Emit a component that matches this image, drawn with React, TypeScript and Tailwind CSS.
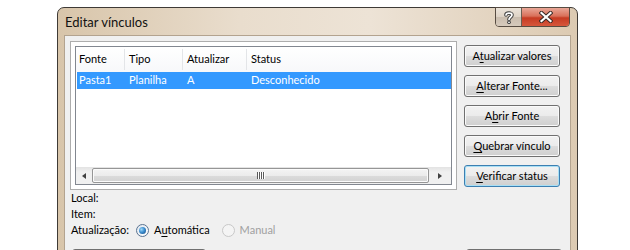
import React from "react";

const U = ({ children }: { children: React.ReactNode }) => (
  <span className="underline underline-offset-[2px] decoration-[1px]">{children}</span>
);

const Btn = ({ children, focused }: { children: React.ReactNode; focused?: boolean }) => (
  <div
    className={
      "h-[22px] w-[96px] rounded-[3px] border flex items-center justify-center text-[11px] leading-none text-black bg-[linear-gradient(to_bottom,#f2f2f2_0%,#ebebeb_50%,#dddddd_51%,#cfcfcf_100%)] " +
      (focused
        ? "border-[#3c7fb1] shadow-[inset_0_0_0_1px_#a8dff5]"
        : "border-[#707070] shadow-[inset_0_0_0_1px_#fafafa]")
    }
  >
    <span className="pb-[1px]">{children}</span>
  </div>
);

const Grip = () => (
  <div className="flex gap-[1px] items-center">
    {[0, 1, 2, 3].map((i) => (
      <div key={i} className="w-[1px] h-[7px] bg-[#5a5a5a] shadow-[1px_0_0_#ffffff]" />
    ))}
  </div>
);

export default function App() {
  return (
    <div className="w-[630px] h-[250px] bg-white overflow-hidden pl-[57px] pt-[7px] font-[Lato,sans-serif] text-black">
      <div className="w-[521px] h-[270px] rounded-t-[7px] border border-[#3e3a36] bg-[linear-gradient(to_right,#d8c5aa_0%,#e9ddcd_35%,#ede3d6_60%,#dccab2_100%)] flex flex-col px-[6px]">
        {/* Title bar */}
        <div className="h-[27px] flex items-start justify-between">
          <div className="pt-[7px] pl-[1px] text-[13px] leading-[15px] text-[#111]">Editar vínculos</div>
          <div className="flex mt-[-1px] mr-[1px] h-[20px] rounded-b-[4px] border border-[#574c42] overflow-hidden">
            <div className="w-[26px] h-full flex items-center justify-center bg-[linear-gradient(to_bottom,#ece4da_0%,#ddd2c5_50%,#cabdae_51%,#d6cabc_100%)] border-r border-[#6b5e52]">
              <svg width="10" height="13" viewBox="0 0 10 13">
                <path d="M2 4 C2 1.5 8 1.5 8 4 C8 6 5 6 5 8.5" fill="none" stroke="#3b3b3b" strokeWidth="3.6" strokeLinecap="round" />
                <circle cx="5" cy="11.3" r="1.8" fill="#3b3b3b" />
                <path d="M2 4 C2 1.5 8 1.5 8 4 C8 6 5 6 5 8.5" fill="none" stroke="#ffffff" strokeWidth="1.7" strokeLinecap="round" />
                <circle cx="5" cy="11.3" r="0.9" fill="#ffffff" />
              </svg>
            </div>
            <div className="w-[47px] h-full flex items-center justify-center bg-[linear-gradient(to_bottom,#e9a797_0%,#d9705a_45%,#c63b23_55%,#d6573c_100%)]">
              <svg width="14" height="12" viewBox="0 0 14 12">
                <path d="M2.5 2 L11.5 10 M11.5 2 L2.5 10" stroke="#3a2a26" strokeWidth="4.2" strokeLinecap="square" />
                <path d="M2.5 2 L11.5 10 M11.5 2 L2.5 10" stroke="#ffffff" strokeWidth="2.2" strokeLinecap="square" />
              </svg>
            </div>
          </div>
        </div>

        {/* Client area */}
        <div className="flex-1 border border-[#b3a38f] bg-[#f0f0f0] flex flex-col pl-[5px] pr-[8px] pt-[5px] text-[11px]">
          <div className="flex gap-[7px]">
            {/* List box */}
            <div className="w-[387px] h-[149px] border border-[#adadad] bg-white p-[4px] flex">
              <div className="flex-1 border border-[#828790] flex flex-col">
                {/* header */}
                <div className="h-[25px] flex items-center bg-[linear-gradient(to_bottom,#ffffff,#f7f8fa)]">
                  <div className="w-[49px] h-[21px] border-r border-[#e3e5e8] pl-[3px] flex items-center">Fonte</div>
                  <div className="w-[58px] h-[21px] border-r border-[#e3e5e8] pl-[4px] flex items-center">Tipo</div>
                  <div className="w-[64px] h-[21px] border-r border-[#e3e5e8] pl-[4px] flex items-center">Atualizar</div>
                  <div className="flex-1 h-[21px] pl-[4px] flex items-center">Status</div>
                </div>
                {/* selected row */}
                <div className="h-[17px] ml-[1px] flex items-center bg-[#3399ff] text-white">
                  <div className="w-[48px] pl-[2px]">Pasta1</div>
                  <div className="w-[58px] pl-[4px]">Planilha</div>
                  <div className="w-[64px] pl-[4px]">A</div>
                  <div className="flex-1 pl-[4px]">Desconhecido</div>
                </div>
                <div className="flex-1" />
                {/* horizontal scrollbar */}
                <div className="h-[17px] flex bg-[linear-gradient(to_bottom,#e3e3e3,#f0f0f0_30%,#f0f0f0)]">
                  <div className="w-[16px] flex items-center justify-center">
                    <div className="w-0 h-0 border-y-[3.5px] border-y-transparent border-r-[4px] border-r-[#404040]" />
                  </div>
                  <div className="flex-1 my-[1px] rounded-[2px] border border-[#969696] bg-[linear-gradient(to_bottom,#f4f4f4_0%,#ececec_50%,#dcdcdc_51%,#d2d2d2_100%)] shadow-[inset_0_0_0_1px_#fbfbfb] flex items-center justify-center">
                    <Grip />
                  </div>
                  <div className="w-[22px] flex items-center justify-center">
                    <div className="w-0 h-0 border-y-[3.5px] border-y-transparent border-l-[4px] border-l-[#404040]" />
                  </div>
                </div>
              </div>
            </div>
            {/* Buttons */}
            <div className="flex flex-col gap-[8px] mt-[4px]">
              <Btn>A<U>t</U>ualizar valores</Btn>
              <Btn><U>A</U>lterar Fonte...</Btn>
              <Btn>A<U>b</U>rir Fonte</Btn>
              <Btn><U>Q</U>uebrar vínculo</Btn>
              <Btn focused><U>V</U>erificar status</Btn>
            </div>
          </div>

          {/* labels */}
          <div className="pl-[1px] flex flex-col">
            <div className="h-[16px] leading-[16px]">Local:</div>
            <div className="h-[16px] leading-[16px]">Item:</div>
            <div className="h-[17px] flex items-center">
              <span>Atualização:</span>
              <div className="ml-[7px] w-[13px] h-[13px] rounded-full border border-[#5b7390] bg-[linear-gradient(135deg,#dfe7ef,#ffffff)] flex items-center justify-center">
                <div className="w-[7px] h-[7px] rounded-full bg-[radial-gradient(circle_at_35%_35%,#9fd8f8_0%,#3d8fd0_45%,#12457d_100%)]" />
              </div>
              <span className="ml-[5px]">A<U>u</U>tomática</span>
              <div className="ml-[12px] w-[13px] h-[13px] rounded-full border border-[#c8c8c8] bg-[#f4f4f4]" />
              <span className="ml-[5px] text-[#a0a0a0]">Manual</span>
            </div>
          </div>

          {/* bottom buttons (cut off) */}
          <div className="flex justify-between mt-[10px] pl-[2px]">
            <div className="w-[134px] h-[22px] rounded-[3px] border border-[#707070] bg-[#ececec]" />
            <div className="w-[96px] h-[22px] rounded-[3px] border border-[#707070] bg-[#ececec]" />
          </div>
        </div>
      </div>
    </div>
  );
}
